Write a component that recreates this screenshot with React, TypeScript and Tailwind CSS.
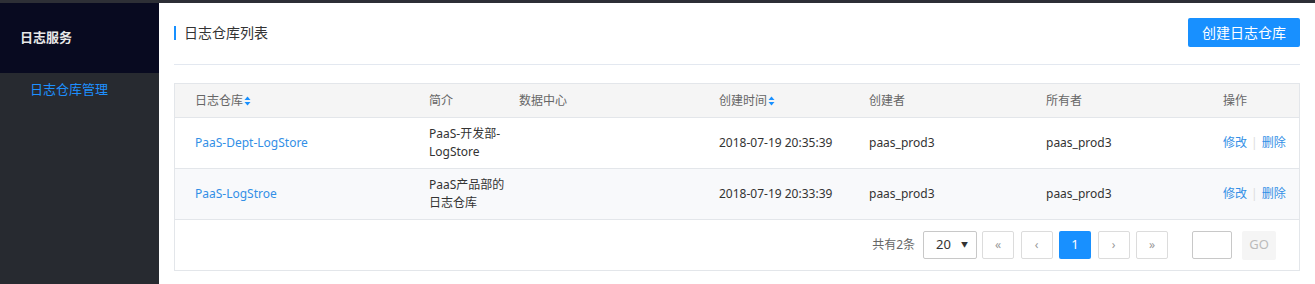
import { ReactNode } from "react";

const font = { fontFamily: '"Noto Sans", "Noto Sans CJK SC", sans-serif' };

// small up/down triangles next to sortable headers
function SortIcon() {
    return (
        <svg className="ml-[1px] inline-block" width="7" height="10" viewBox="0 0 7 10">
            <path d="M3.5 0.5 L6.5 4 L0.5 4 Z" fill="#1890ff" />
            <path d="M3.5 9.5 L6.5 6 L0.5 6 Z" fill="#1890ff" />
        </svg>
    );
}

const cols = "grid grid-cols-[234px_90px_200px_150px_177px_177px_96px]";

interface Row {
    name: string;
    desc: ReactNode;
    time: string;
    creator: string;
    owner: string;
    striped?: boolean;
}

const rows: Row[] = [
    {
        name: "PaaS-Dept-LogStore",
        desc: (
            <>
                PaaS-开发部-
                <br />
                LogStore
            </>
        ),
        time: "2018-07-19 20:35:39",
        creator: "paas_prod3",
        owner: "paas_prod3",
    },
    {
        name: "PaaS-LogStroe",
        desc: (
            <>
                PaaS产品部的
                <br />
                日志仓库
            </>
        ),
        time: "2018-07-19 20:33:39",
        creator: "paas_prod3",
        owner: "paas_prod3",
        striped: true,
    },
];

function PageBtn({ children, active }: { children: ReactNode; active?: boolean }) {
    return (
        <div
            className={
                active
                    ? "flex h-[28px] w-[32px] items-center justify-center rounded-[2px] bg-[#1890ff] text-[13px] text-white"
                    : "flex h-[28px] w-[32px] items-center justify-center rounded-[2px] border border-[#dcdcdc] bg-white text-[12px] text-[#999]"
            }
        >
            {children}
        </div>
    );
}

export default function App() {
    return (
        <div className="flex h-[284px] w-[1315px] flex-col overflow-hidden bg-white" style={font}>
            {/* top strip */}
            <div className="h-[3px] bg-[#2d2f36]" />

            <div className="flex flex-1">
                {/* Sidebar */}
                <aside className="w-[159px] bg-[#272a30]">
                    <div className="flex h-[70px] items-center bg-[#080a20] pl-5 text-[13px] font-bold text-[#e8e8e8]">
                        日志服务
                    </div>
                    <div className="flex h-[34px] items-center pl-[30px] text-[13px] text-[#1e90ff]">
                        日志仓库管理
                    </div>
                </aside>

                {/* Main */}
                <main className="flex-1 px-[15px]">
                    <div className="flex items-center justify-between border-b border-[#e3e8f0] pt-[15px] pb-[17px]">
                        <div className="flex items-center">
                            <span className="mr-[8px] h-[14px] w-[2px] bg-[#1890ff]" />
                            <span className="text-[14px] text-[#333]">日志仓库列表</span>
                        </div>
                        <button
                            type="button"
                            className="h-[29px] w-[112px] rounded-[2px] bg-[#1890ff] text-[14px] text-white"
                        >
                            创建日志仓库
                        </button>
                    </div>

                    {/* Table */}
                    <div className="mt-[18px] border border-[#e3e6ea] text-[12px]">
                        <div className={`${cols} h-[34px] items-center border-b border-[#e3e6ea] bg-[#f5f5f5] text-[#666]`}>
                            <div className="flex items-center pl-5">
                                日志仓库
                                <SortIcon />
                            </div>
                            <div className="pl-5">简介</div>
                            <div className="pl-5">数据中心</div>
                            <div className="flex items-center pl-5">
                                创建时间
                                <SortIcon />
                            </div>
                            <div className="pl-5">创建者</div>
                            <div className="pl-5">所有者</div>
                            <div className="pl-5">操作</div>
                        </div>

                        {rows.map((r) => (
                            <div
                                key={r.name}
                                className={`${cols} h-[51px] items-center border-b border-[#e3e6ea] leading-[18px] text-[#333] ${
                                    r.striped ? "bg-[#f8f9fb]" : "bg-white"
                                }`}
                            >
                                <div className="pl-5 text-[#338fe6]">{r.name}</div>
                                <div className="whitespace-nowrap pl-5">{r.desc}</div>
                                <div className="pl-5" />
                                <div className="pl-5">{r.time}</div>
                                <div className="pl-5">{r.creator}</div>
                                <div className="pl-5">{r.owner}</div>
                                <div className="flex items-center pl-5 text-[#338fe6]">
                                    修改
                                    <span className="mx-[4px] text-[#ddd]">|</span>
                                    删除
                                </div>
                            </div>
                        ))}

                        {/* Pagination */}
                        <div className="flex h-[50px] items-center justify-end pr-[23px]">
                            <span className="mr-[8px] text-[#666]">共有2条</span>
                            <div className="flex h-[28px] w-[54px] items-center justify-between rounded-[2px] border border-[#c8c8c8] pr-[8px] pl-[12px] text-[13px] text-[#333]">
                                <span>20</span>
                                <span className="text-[7px] text-[#333]">▼</span>
                            </div>
                            <div className="ml-[5px] flex items-center gap-[6.5px]">
                                <PageBtn>«</PageBtn>
                                <PageBtn>‹</PageBtn>
                                <PageBtn active>1</PageBtn>
                                <PageBtn>›</PageBtn>
                                <PageBtn>»</PageBtn>
                            </div>
                            <div className="ml-[24px] h-[28px] w-[40px] rounded-[2px] border border-[#c8c8c8]" />
                            <div className="ml-[10px] flex h-[29px] w-[34px] items-center justify-center rounded-[2px] bg-[#f5f5f5] text-[13px] text-[#bbb]">
                                GO
                            </div>
                        </div>
                    </div>
                </main>
            </div>
        </div>
    );
}
